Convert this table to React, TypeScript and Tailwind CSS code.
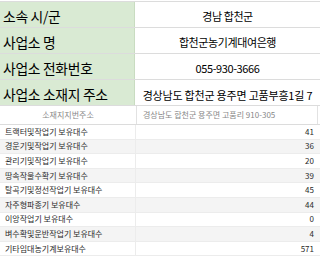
const INFO = [
  { label: '소속 시/군', value: '경남 합천군' },
  { label: '사업소 명', value: '합천군농기계대여은행' },
  { label: '사업소 전화번호', value: '055-930-3666' },
  { label: '사업소 소재지 주소', value: '경상남도 합천군 용주면 고품부흥1길 7' },
];

const COUNTS = [
  { name: '트랙터및작업기 보유대수', n: 41 },
  { name: '경운기및작업기 보유대수', n: 36 },
  { name: '관리기및작업기 보유대수', n: 20 },
  { name: '땅속작물수확기 보유대수', n: 39 },
  { name: '탈곡기및정선작업기 보유대수', n: 45 },
  { name: '자주형파종기 보유대수', n: 44 },
  { name: '이앙작업기 보유대수', n: 0 },
  { name: '벼수확및운반작업기 보유대수', n: 4 },
  { name: '기타임대농기계보유대수', n: 571 },
];

export default function App() {
  return (
    <div
      className="w-[320px] h-[257px] overflow-hidden bg-white text-black"
      style={{ fontFamily: '"Noto Sans CJK KR", "Noto Sans", sans-serif' }}
    >
      {/* top info table */}
      <div className="mt-px border-t border-[#dcdcdc]">
        {INFO.map((row, i) => (
          <div key={row.label} className="flex h-[26px] border-b border-[#dcdcdc]">
            <div className="w-[135px] shrink-0 bg-[#d9ead3] border-r border-[#c9dcc1] flex items-end pl-[3px] pb-[3px] text-[13.8px] leading-none tracking-[-0.3px]">
              {row.label}
            </div>
            <div
              className={`flex-1 flex items-end justify-center text-[11px] leading-none whitespace-nowrap ${
                i === 3 ? 'pb-[4px] tracking-[-0.2px]' : 'pb-[5px] tracking-[-0.4px]'
              }`}
            >
              {row.value}
            </div>
          </div>
        ))}
      </div>

      {/* lot address */}
      <div className="flex h-[19px] border-b border-[#dcdcdc] text-[8px] text-[#888]">
        <div className="w-[136px] shrink-0 flex items-center justify-center">소재지지번주소</div>
        <div className="flex-1 mr-[2px] border-x border-[#e2e2e2] flex items-center pl-[6px]">
          경상남도 합천군 용주면 고품리 910-305
        </div>
      </div>

      {/* equipment counts */}
      {COUNTS.map((c, i) => (
        <div
          key={c.name}
          className={`flex h-[14.6px] border-b border-[#ececec] text-[8px] leading-none text-[#2a2a2a] ${
            i % 2 === 1 ? 'bg-[#f4f4f4]' : 'bg-white'
          }`}
        >
          <div className="w-[136px] shrink-0 border-r border-[#ececec] flex items-center pl-[5px]">{c.name}</div>
          <div className="flex-1 flex items-center justify-end pr-[6px]">{c.n}</div>
        </div>
      ))}
    </div>
  );
}
